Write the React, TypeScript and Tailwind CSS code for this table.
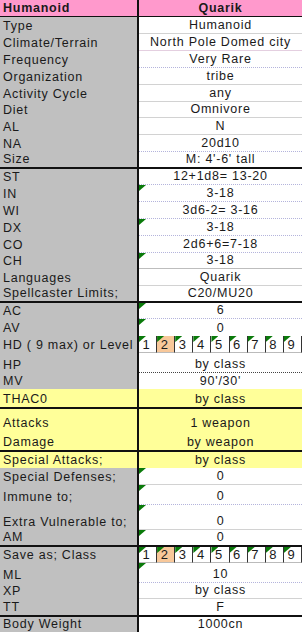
type Row = {
  label: string;
  value?: string;
  h: string;
  line?: string;
  row?: string;
  tone?: "gray" | "yellow";
  tri?: boolean;
  boxes?: boolean;
};

const solid = "border-b border-[#d2d2d2]";
const dotted = "border-b border-dotted border-[#b4b4dc]";
const darkDot = "border-b border-dotted border-[#444]";
const thick = "border-b-2 border-[#111]";

const rows: Row[] = [
  { label: "Type", value: "Humanoid", h: "h-[17px]", line: solid },
  { label: "Climate/Terrain", value: "North Pole Domed city", h: "h-[17px]", line: "border-b border-[#e4cfe0]" },
  { label: "Frequency", value: "Very Rare", h: "h-[17px]", line: dotted },
  { label: "Organization", value: "tribe", h: "h-[17px]", line: solid },
  { label: "Activity Cycle", value: "any", h: "h-[17px]", line: solid },
  { label: "Diet", value: "Omnivore", h: "h-[16px]", line: solid },
  { label: "AL", value: "N", h: "h-[17px]", line: solid },
  { label: "NA", value: "20d10", h: "h-[17px]", line: dotted },
  { label: "Size", value: "M: 4'-6' tall", h: "h-[17px]", row: thick },
  { label: "ST", value: "12+1d8= 13-20", h: "h-[16px]", line: dotted },
  { label: "IN", value: "3-18", h: "h-[17px]", line: dotted, tri: true },
  { label: "WI", value: "3d6-2= 3-16", h: "h-[17px]", line: dotted },
  { label: "DX", value: "3-18", h: "h-[17px]", line: dotted, tri: true },
  { label: "CO", value: "2d6+6=7-18", h: "h-[17px]", line: dotted },
  { label: "CH", value: "3-18", h: "h-[16px]", line: "border-b border-[#bdbdbd]", tri: true },
  { label: "Languages", value: "Quarik", h: "h-[17px]", line: solid },
  { label: "Spellcaster Limits;", value: "C20/MU20", h: "h-[17px]", row: thick },
  { label: "AC", value: "6", h: "h-[16px]", line: dotted, tri: true },
  { label: "AV", value: "0", h: "h-[17px]", tri: true },
  { label: "HD ( 9 max) or Level", h: "h-[17px]", boxes: true },
  { label: "HP", value: "by class", h: "h-[20px]", line: darkDot },
  { label: "MV", value: "90'/30'", h: "h-[16px]" },
  { label: "THAC0", value: "by class", h: "h-[20px]", row: thick, tone: "yellow" },
  { label: "Attacks", value: "1 weapon", h: "h-[22px]", tone: "yellow" },
  { label: "Damage", value: "by weapon", h: "h-[21px]", row: thick, tone: "yellow" },
  { label: "Special Attacks;", value: "by class", h: "h-[16px]", tone: "yellow" },
  { label: "Special Defenses;", value: "0", h: "h-[17px]", line: solid, tri: true },
  { label: "Immune to;", value: "0", h: "h-[20px]", line: dotted, tri: true },
  { label: "Extra Vulnerable to;", value: "0", h: "h-[25px]", line: solid, tri: true },
  { label: "AM", value: "0", h: "h-[17px]", row: thick, tri: true },
  { label: "Save as; Class", h: "h-[16px]", boxes: true },
  { label: "ML", value: "10", h: "h-[20px]", line: dotted, tri: true },
  { label: "XP", value: "by class", h: "h-[16px]", line: solid },
  { label: "TT", value: "F", h: "h-[18px]", row: thick },
  { label: "Body Weight", value: "1000cn", h: "h-[15px]" },
];

function Flag() {
  return (
    <span className="absolute left-0 top-0 h-[6px] w-[7px] bg-[#0a7a0a] [clip-path:polygon(0_0,100%_0,0_100%)]" />
  );
}

function Boxes() {
  return (
    <div className="flex h-full flex-1">
      {[1, 2, 3, 4, 5, 6, 7, 8, 9].map((n) => (
        <div
          key={n}
          className={`relative flex flex-1 items-end justify-center border-r border-b border-r-[#333] border-b-[#bbb] pr-[2px] text-[13px] ${
            n === 2 ? "bg-[#f8c89a]" : "bg-white"
          }`}
        >
          <Flag />
          <span>{n}</span>
        </div>
      ))}
    </div>
  );
}

export default function App() {
  return (
    <div className="h-[632px] w-[302px] overflow-hidden bg-white font-['Liberation_Sans',Arial,sans-serif] text-[12.5px] leading-[14px] tracking-[0.75px] text-[#1a1a1a]">
      <div className="flex h-[17px] border-b border-[#111] bg-[#ff99cc] font-bold">
        <div className="flex w-[139px] shrink-0 items-end border-r-2 border-[#111] pb-[1px] pl-[3px]">
          Humanoid
        </div>
        <div className="flex flex-1 items-end justify-center pb-[1px]">Quarik</div>
      </div>

      {rows.map((r) => (
        <div key={r.label} className={`flex ${r.h} ${r.row ?? ""}`}>
          <div
            className={`flex w-[139px] shrink-0 items-end border-r-2 border-[#111] pb-[1px] pl-[3px] ${
              r.tone === "yellow" ? "bg-[#ffff99]" : "bg-[#c0c0c0]"
            }`}
          >
            <span className="whitespace-nowrap">{r.label}</span>
          </div>
          {r.boxes ? (
            <Boxes />
          ) : (
            <div
              className={`relative flex flex-1 items-end justify-center pb-[1px] ${
                r.tone === "yellow" ? "bg-[#ffff99]" : "bg-white"
              } ${r.line ?? ""}`}
            >
              {r.tri && <Flag />}
              <span className="whitespace-nowrap">{r.value}</span>
            </div>
          )}
        </div>
      ))}
    </div>
  );
}
